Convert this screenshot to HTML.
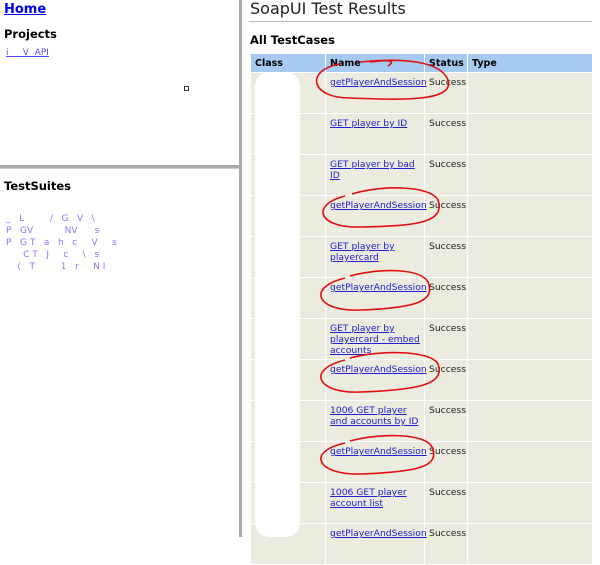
<!DOCTYPE html>
<html><head><style>
*{margin:0;padding:0;box-sizing:border-box}
body{width:600px;height:537px;overflow:hidden;background:#fff;font-family:"DejaVu Sans","Liberation Sans",sans-serif;position:relative}
.a{position:absolute}
a{color:#00f;text-decoration:underline}
td a{color:#2020d0}
table{position:absolute;left:250px;top:53px;border-collapse:separate;border-spacing:1px;width:343px;font-size:9.2px;table-layout:fixed}
th{background:#a6caf0;text-align:left;height:18px;padding:0 4px;font-weight:bold;font-size:9.5px}
td{background:#ecebdf;height:40px;vertical-align:top;padding:4px 4px 0 4px;line-height:11px}
td:nth-child(3){color:#222}
.blob{position:absolute;background:#fff;border-radius:8px}
</style></head><body>
<div class="a" style="left:239px;top:0;width:3px;height:537px;background:#aaa"></div>
<div class="a" style="left:0;top:165px;width:239px;height:3px;background:#aaa"></div>
<div class="a" style="left:0;top:168px;width:239px;height:1px;background:#ccc"></div>
<a class="a" style="left:4px;top:2px;font-size:13px;font-weight:bold">Home</a>
<div class="a" style="left:4px;top:27px;font-size:11.5px;font-weight:bold">Projects</div>
<a class="a" style="left:6px;top:48px;font-size:9px;opacity:.7">i &nbsp; &nbsp; V &nbsp;API</a>
<div class="a" style="left:184px;top:86px;width:5px;height:5px;border:1px solid #333"></div>
<div class="a" style="left:4px;top:179px;font-size:11.5px;font-weight:bold">TestSuites</div>
<div class="a" style="left:6px;top:213px;font-size:9px;line-height:12px;color:#44f;opacity:.7">
_ &nbsp; L &nbsp; &nbsp; &nbsp; &nbsp; / &nbsp;&nbsp;G &nbsp; V &nbsp; \<br>
P &nbsp; GV &nbsp; &nbsp; &nbsp; &nbsp; &nbsp; NV &nbsp; &nbsp;&nbsp; s<br>
P &nbsp; G T &nbsp; a &nbsp; h &nbsp; c &nbsp; &nbsp; V &nbsp; &nbsp; s<br>
&nbsp; &nbsp; &nbsp; C T &nbsp; J &nbsp; &nbsp; c &nbsp; &nbsp; \ &nbsp; s<br>
&nbsp; &nbsp; ( &nbsp; T &nbsp; &nbsp; &nbsp; &nbsp; 1 &nbsp; r &nbsp; &nbsp; N I</div>
<div class="a" style="left:250px;top:-1px;font-size:16px;color:#222">SoapUI Test Results</div>
<div class="a" style="left:249px;top:21px;width:343px;height:1px;background:#bbb"></div>
<div class="a" style="left:250px;top:33px;font-size:11.5px;font-weight:bold">All TestCases</div>
<table>
<colgroup><col style="width:74px"><col style="width:98px"><col style="width:42px"><col></colgroup>
<tr><th>Class</th><th>Name</th><th>Status</th><th>Type</th></tr>
<tr><td></td><td><a>getPlayerAndSession</a></td><td>Success</td><td></td></tr>
<tr><td></td><td><a>GET player by ID</a></td><td>Success</td><td></td></tr>
<tr><td></td><td><a>GET player by bad ID</a></td><td>Success</td><td></td></tr>
<tr><td></td><td><a>getPlayerAndSession</a></td><td>Success</td><td></td></tr>
<tr><td></td><td><a>GET player by playercard</a></td><td>Success</td><td></td></tr>
<tr><td></td><td><a>getPlayerAndSession</a></td><td>Success</td><td></td></tr>
<tr><td></td><td><a>GET player by playercard - embed accounts</a></td><td>Success</td><td></td></tr>
<tr><td></td><td><a>getPlayerAndSession</a></td><td>Success</td><td></td></tr>
<tr><td></td><td><a>1006 GET player and accounts by ID</a></td><td>Success</td><td></td></tr>
<tr><td></td><td><a>getPlayerAndSession</a></td><td>Success</td><td></td></tr>
<tr><td></td><td><a>1006 GET player account list</a></td><td>Success</td><td></td></tr>
<tr><td></td><td><a>getPlayerAndSession</a></td><td>Success</td><td></td></tr>
</table>
<div class="blob" style="left:255px;top:72px;width:45px;height:465px;border-radius:14px"></div>
<div class="blob" style="left:268px;top:110px;width:32px;height:400px;border-radius:20px"></div>
<svg class="a" style="left:0;top:0" width="600" height="537" fill="none" stroke="#e01010" stroke-width="1.6">
<path d="M370 62 Q400 58 388 66 M340 64 C305 70 310 98 350 98 C400 100 455 102 448 80 C440 60 400 58 360 62"/>
<path d="M345 196 C310 205 318 228 360 227 C420 226 445 222 438 200 C430 185 380 185 352 194"/>
<path d="M345 278 C305 288 318 312 360 310 C420 308 435 300 428 282 C420 268 380 268 350 276"/>
<path d="M345 360 C305 370 318 394 360 392 C420 390 445 384 438 364 C430 350 380 350 350 358"/>
<path d="M345 443 C305 452 318 475 360 474 C420 472 440 466 432 447 C425 433 380 433 350 441"/>
</svg>
</body></html>
